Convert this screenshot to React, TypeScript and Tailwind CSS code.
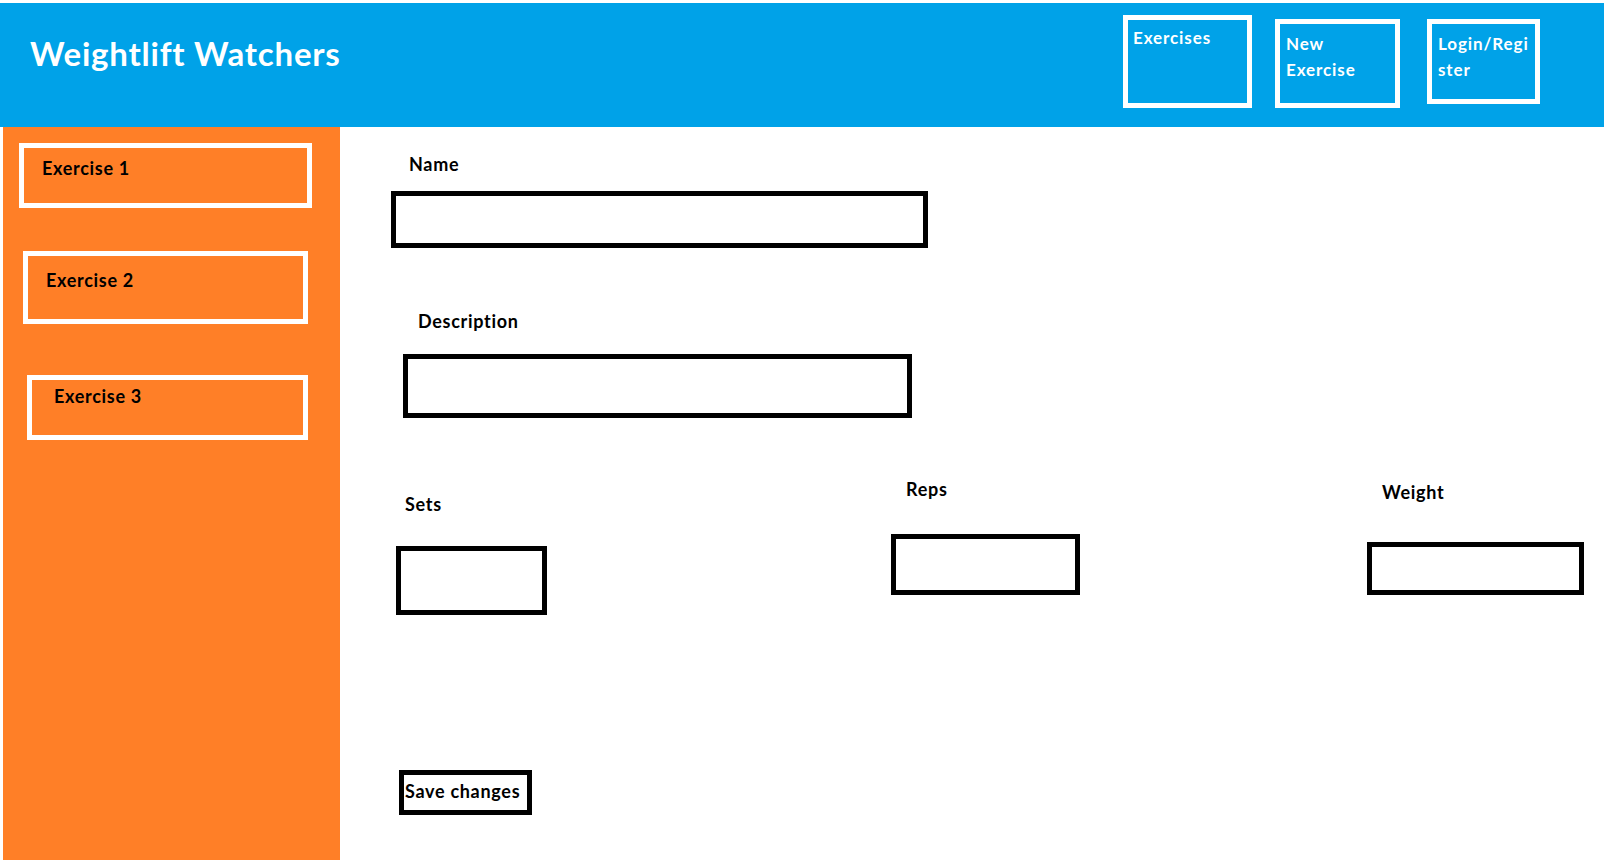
import React from "react";

function NavBox({
  label,
  className,
}: {
  label: React.ReactNode;
  className: string;
}) {
  return (
    <div
      className={`border-[5px] border-white text-white font-bold text-[17px] tracking-[0.9px] leading-[26px] whitespace-nowrap ${className}`}
    >
      {label}
    </div>
  );
}

function SideItem({ label, className }: { label: string; className: string }) {
  return (
    <div
      className={`border-[5px] border-white text-black font-bold text-[18px] tracking-[0.7px] leading-[1.2] whitespace-nowrap ${className}`}
    >
      {label}
    </div>
  );
}

export default function App() {
  return (
    <div className="w-[1608px] h-[864px] bg-white pt-[3px] font-[Lato,sans-serif] overflow-hidden">
      {/* Header */}
      <div className="w-[1604px] h-[124px] bg-[#00a2e8] flex items-start justify-between">
        <div className="ml-[30px] mt-[31px] text-white font-bold text-[33px] tracking-[0.8px] leading-[1.2] whitespace-nowrap">
          Weightlift Watchers
        </div>
        <div className="flex items-start mr-[64px]">
          <NavBox
            label="Exercises"
            className="mt-[12px] w-[129px] h-[93px] pl-[5px] pt-[5px]"
          />
          <NavBox
            label={
              <>
                New
                <br />
                Exercise
              </>
            }
            className="ml-[23px] mt-[16px] w-[125px] h-[89px] pl-[6px] pt-[7px]"
          />
          <NavBox
            label={
              <>
                Login/Regi
                <br />
                ster
              </>
            }
            className="ml-[27px] mt-[16px] w-[113px] h-[85px] pl-[6px] pt-[7px]"
          />
        </div>
      </div>

      {/* Body */}
      <div className="flex items-start">
        {/* Sidebar */}
        <div className="ml-[3px] w-[337px] h-[733px] bg-[#ff7f27] flex flex-col items-start">
          <SideItem
            label="Exercise 1"
            className="ml-[16px] mt-[16px] w-[293px] h-[65px] pl-[18px] pt-[10px]"
          />
          <SideItem
            label="Exercise 2"
            className="ml-[20px] mt-[43px] w-[285px] h-[73px] pl-[18px] pt-[14px]"
          />
          <SideItem
            label="Exercise 3"
            className="ml-[24px] mt-[51px] w-[281px] h-[65px] pl-[22px] pt-[6px]"
          />
        </div>

        {/* Main form */}
        <div className="flex-1 flex flex-col items-start text-black font-bold text-[18px] tracking-[0.7px] leading-[1.2]">
          <div className="ml-[69px] mt-[27px]">Name</div>
          <div className="ml-[51px] mt-[15px] w-[537px] h-[57px] border-[5px] border-black" />

          <div className="ml-[78px] mt-[63px]">Description</div>
          <div className="ml-[63px] mt-[22px] w-[509px] h-[64px] border-[5px] border-black" />

          <div className="flex items-start">
            <div className="ml-[56px] mt-[76px] w-[151px] flex flex-col items-start">
              <div className="ml-[9px]">Sets</div>
              <div className="mt-[30px] w-[151px] h-[69px] border-[5px] border-black" />
            </div>
            <div className="ml-[344px] mt-[61px] w-[189px] flex flex-col items-start">
              <div className="ml-[15px]">Reps</div>
              <div className="mt-[33px] w-[189px] h-[61px] border-[5px] border-black" />
            </div>
            <div className="ml-[287px] mt-[64px] w-[217px] flex flex-col items-start">
              <div className="ml-[15px]">Weight</div>
              <div className="mt-[38px] w-[217px] h-[53px] border-[5px] border-black" />
            </div>
          </div>

          <div className="ml-[59px] mt-[155px] w-[133px] h-[45px] border-[5px] border-black pl-[1px] pt-[6px] whitespace-nowrap">
            Save changes
          </div>
        </div>
      </div>
    </div>
  );
}
